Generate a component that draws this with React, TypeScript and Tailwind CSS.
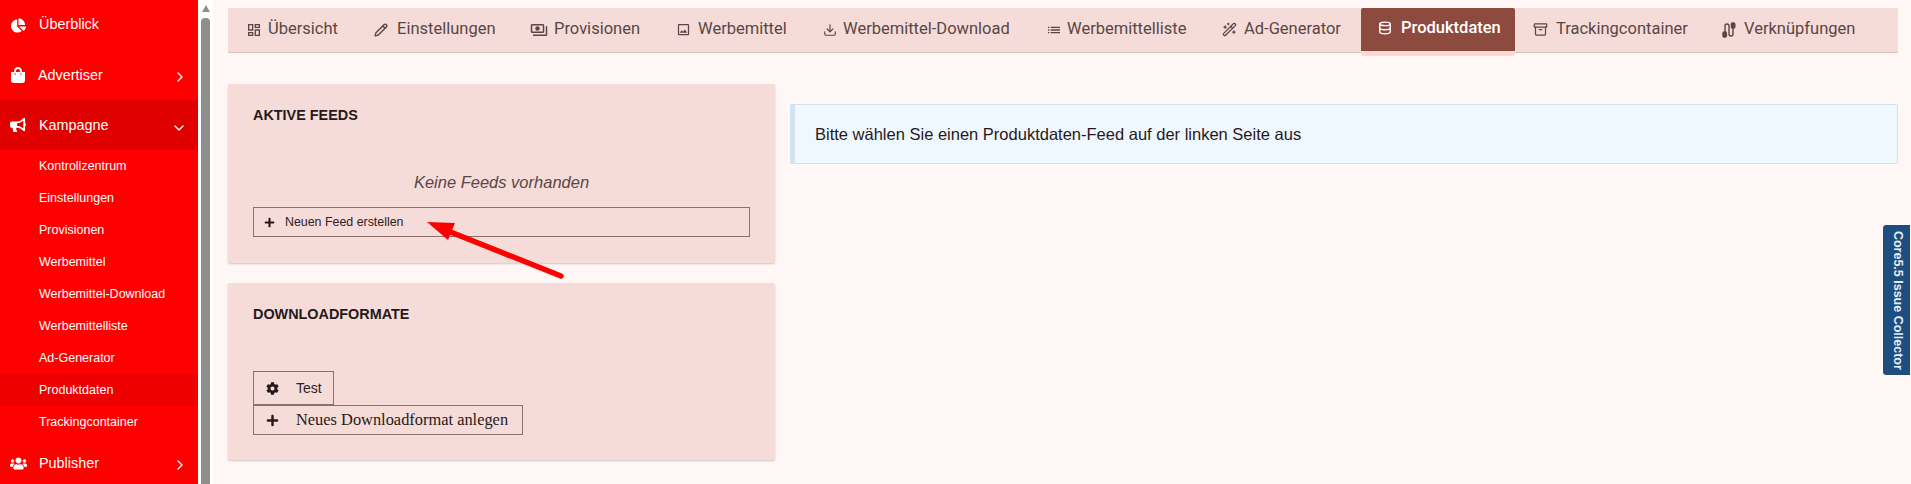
import React from 'react';
import { FaChartPie, FaShoppingBag, FaBullhorn, FaUsers, FaPlus, FaCog } from 'react-icons/fa';
import { ChevronRight, ChevronDown, Download, WandSparkles, Database, Archive, Pencil } from 'lucide-react';
import { MdOutlineDashboard, MdOutlinePayments, MdOutlineImage, MdList } from 'react-icons/md';

const subItems = [
  'Kontrollzentrum',
  'Einstellungen',
  'Provisionen',
  'Werbemittel',
  'Werbemittel-Download',
  'Werbemittelliste',
  'Ad-Generator',
  'Produktdaten',
  'Trackingcontainer',
];

const RouteIcon = () => (
  <svg width="14" height="16" viewBox="0 0 14 16" fill="none" stroke="currentColor" strokeWidth="1.4">
    <path d="M3 10V4a2 2 0 0 1 4 0v8a2 2 0 0 0 4 0V6" />
    <rect x="1" y="10" width="3.4" height="5" rx="1.2" fill="currentColor" />
    <rect x="9.4" y="1" width="3.4" height="5" rx="1.2" fill="currentColor" />
  </svg>
);

const tabs = [
  { label: 'Übersicht', icon: <MdOutlineDashboard size={16} />, box: 'w-[22px]', width: 'w-[128px]' },
  { label: 'Einstellungen', icon: <Pencil size={14} strokeWidth={2.4} />, box: 'w-[23px]', width: 'w-[156px]' },
  { label: 'Provisionen', icon: <MdOutlinePayments size={18} />, box: 'w-[24px]', width: 'w-[146px]' },
  { label: 'Werbemittel', icon: <MdOutlineImage size={15} />, box: 'w-[22px]', width: 'w-[147px]' },
  { label: 'Werbemittel-Download', icon: <Download size={14} />, box: 'w-[20px]', width: 'w-[223px]' },
  { label: 'Werbemittelliste', icon: <MdList size={16} />, box: 'w-[21px]', width: 'w-[176px]' },
  { label: 'Ad-Generator', icon: <WandSparkles size={15} />, box: 'w-[22px]', width: 'w-[157px]' },
  { label: 'Produktdaten', icon: <Database size={14} strokeWidth={2.4} />, box: 'w-[23px]', width: 'w-[154px]', active: true },
  { label: 'Trackingcontainer', icon: <Archive size={15} />, box: 'w-[23px]', width: 'w-[189px]' },
  { label: 'Verknüpfungen', icon: <RouteIcon />, box: 'w-[22px]', width: 'flex-1' },
];

const Sidebar = () => (
  <aside className="w-[198px] h-[484px] shrink-0 overflow-hidden bg-[#ff0000] text-white">
    <div className="h-[50px] flex items-center pl-[11px] text-[14.4px]">
      <FaChartPie size={15} className="mr-[13px]" />
      <span>Überblick</span>
    </div>
    <div className="h-[50px] flex items-center pl-[10px] pr-[10px] text-[14.4px]">
      <FaShoppingBag size={16} className="mr-[12px]" />
      <span className="flex-1 pt-[1px]">Advertiser</span>
      <ChevronRight size={16} strokeWidth={2} className="mt-[4px]" />
    </div>
    <div className="h-[50px] flex items-center pl-[10px] pr-[11px] text-[14.4px] bg-[#e00000]">
      <FaBullhorn size={16} className="mr-[13px]" />
      <span className="flex-1 pt-[1px]">Kampagne</span>
      <ChevronDown size={16} strokeWidth={2} className="mt-[5px]" />
    </div>
    <div>
      {subItems.map((item) => (
        <div
          key={item}
          className={`h-[32px] flex items-center pl-[39px] text-[12.5px] ${item === 'Produktdaten' ? 'bg-[#ee0000]' : ''}`}
        >
          {item}
        </div>
      ))}
    </div>
    <div className="h-[50px] flex items-center pl-[10px] pr-[10px] text-[14.4px]">
      <FaUsers size={17} className="mr-[12px]" />
      <span className="flex-1 pt-[1px]">Publisher</span>
      <ChevronRight size={16} strokeWidth={2} className="mt-[4px]" />
    </div>
  </aside>
);

const Scrollbar = () => (
  <div className="w-[15px] h-[484px] shrink-0 bg-white pl-[3px] pr-[3px]">
    <div className="h-[18px] flex justify-center items-start pt-[5px]">
      <div className="w-0 h-0 border-x-[4px] border-x-transparent border-b-[7px] border-b-[#8f8f8f]" />
    </div>
    <div className="h-[466px] bg-[#8f8f8f] rounded-t-[4px]" />
  </div>
);

const Card = ({ title, children, className }: { title: string; children: React.ReactNode; className: string }) => (
  <section className={`bg-[#f5dcd8] rounded-[2px] shadow-[0_1px_2px_rgba(0,0,0,0.2)] ${className}`}>
    <div className="h-[62px] px-[25px] pt-[23px] text-[14.4px] leading-[16px] font-bold text-[#27191a]">{title}</div>
    {children}
  </section>
);

export default function App() {
  return (
    <div className="w-[1911px] h-[484px] overflow-hidden flex bg-[#fff7f5] relative font-['Liberation_Sans',sans-serif]">
      <Sidebar />
      <Scrollbar />
      <main className="flex-1 pl-[15px] pt-[8px] min-w-0">
        {/* Tabs */}
        <nav className="w-[1670px] h-[45px] flex bg-[#f5dcd8] border-b border-b-[#d9c4c0] font-['Roboto',sans-serif] text-[16.5px] text-[#5a4646]">
          {tabs.map((tab) => (
            <div
              key={tab.label}
              className={`${tab.width} shrink-0 flex items-center ${
                tab.active
                  ? 'h-[48px] pl-[17px] pb-[3px] rounded-[2px] bg-[#8d4b3f] text-white font-medium border-b-[5px] border-b-[#fdd9d2]'
                  : 'pl-[18px] pb-[1px]'
              }`}
            >
              <span className={`${tab.box} shrink-0 flex items-center`}>{tab.icon}</span>
              <span className="whitespace-nowrap">{tab.label}</span>
            </div>
          ))}
        </nav>

        <div className="flex gap-[15px] pt-[31px]">
          <div className="w-[547px] shrink-0 flex flex-col gap-[20px]">
            <Card title="AKTIVE FEEDS" className="h-[179px]">
              <p className="pt-[24px] text-center italic text-[16.5px] leading-[24px] text-[#5a4646]">Keine Feeds vorhanden</p>
              <button className="mt-[13px] ml-[25px] w-[497px] h-[30px] flex items-center border border-[#8a716c] text-[12.4px] text-[#30211f] pl-[10px] gap-[10px]">
                <FaPlus size={11} className="text-[#27191a]" />
                <span>Neuen Feed erstellen</span>
              </button>
            </Card>
            <Card title="DOWNLOADFORMATE" className="h-[177px]">
              <div className="pt-[26px] pl-[25px]">
                <div className="w-[81px] h-[34px] flex items-center border border-[#8a716c] pl-[12px] gap-[17px] text-[14px] text-[#30211f]">
                  <FaCog size={13} className="text-[#27191a]" />
                  <span>Test</span>
                </div>
                <div className="w-[270px] h-[30px] flex items-center border border-[#8a716c] pl-[12px] gap-[17px] font-['Liberation_Serif',serif] text-[16.4px] text-[#27191a]">
                  <FaPlus size={13} />
                  <span>Neues Downloadformat anlegen</span>
                </div>
              </div>
            </Card>
          </div>
          <div className="w-[1108px] h-[60px] mt-[20px] pl-[20px] flex items-center bg-[#eff7ff] border border-[#cfe3f2] border-l-[5px] rounded-[2px] text-[16.5px] text-[#27191a]">
            Bitte wählen Sie einen Produktdaten-Feed auf der linken Seite aus
          </div>
        </div>
      </main>

      {/* Pfeil */}
      <svg className="absolute left-[420px] top-[212px]" width="150" height="70" viewBox="0 0 150 70" fill="none">
        <path d="M141 64 L28 19" stroke="#ff0000" strokeWidth="5.5" strokeLinecap="round" />
        <path d="M7 10 L35 11 L28 28 Z" fill="#ff0000" />
      </svg>

      {/* Issue Collector */}
      <div className="absolute right-0 top-[224px] w-[29px] h-[152px] pl-[2px] bg-[#1e4d80] border border-white rounded-l-[4px] flex items-center justify-center">
        <span className="rotate-90 whitespace-nowrap text-[12.5px] font-bold text-[#e6edf5]">Core5.5 Issue Collector</span>
      </div>
    </div>
  );
}
